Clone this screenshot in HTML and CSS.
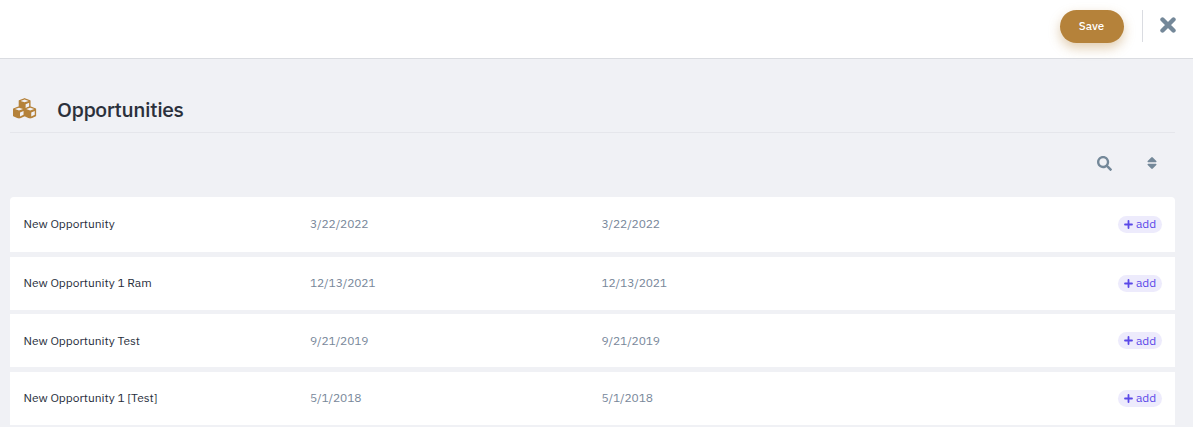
FILE: index.html
```
<!DOCTYPE html>
<html lang="en">
<head>
    <meta charset="UTF-8">
    <meta name="viewport" content="width=device-width, initial-scale=1.0">
    <title>Opportunities</title>
    <link rel="stylesheet" href="styles.css">
</head>
<body>
    <!-- Icons used more than once -->
    <svg class="icon-defs">
        <symbol id="plus" viewBox="0 0 9 9">
            <path d="M4.5 1v7M1 4.5h7" fill="none" stroke="currentColor" stroke-width="1.8" stroke-linecap="round"/>
        </symbol>
        <symbol id="cube" viewBox="0 0 12 12">
            <path d="M6 0.8L11.2 2.8V9L6 11.4L0.8 9V2.8Z" fill="currentColor" stroke="currentColor" stroke-width="1.4" stroke-linejoin="round"/>
            <path d="M6 1.4L9.9 2.8L6 4.2L2.1 2.8Z M7 6L10.4 4.7V8.3L7 9.9Z" fill="#f0f1f5"/>
        </symbol>
    </svg>

    <header class="topbar">
        <button class="save-btn">Save</button>
        <button class="close-btn" aria-label="Close">
            <svg width="16" height="16" viewBox="0 0 16 16">
                <path d="M2.5 2.5L13.5 13.5M13.5 2.5L2.5 13.5" fill="none" stroke="currentColor" stroke-width="4.4" stroke-linecap="round"/>
            </svg>
        </button>
    </header>

    <main>
        <div class="title">
            <svg class="cubes" width="24" height="21" viewBox="0 0 24 21">
                <use href="#cube" x="5.4" y="0" width="12.4" height="12.4"/>
                <use href="#cube" x="-0.2" y="8.2" width="12.4" height="12.4"/>
                <use href="#cube" x="11" y="8.2" width="12.4" height="12.4"/>
            </svg>
            <h1>Opportunities</h1>
        </div>

        <div class="tools">
            <svg width="15" height="15" viewBox="0 0 512 512">
                <path fill="currentColor" d="M505 442.7L405.3 343c-4.5-4.5-10.6-7-17-7H372c27.6-35.3 44-79.7 44-128C416 93.1 322.9 0 208 0S0 93.1 0 208s93.1 208 208 208c48.3 0 92.7-16.4 128-44v16.3c0 6.4 2.5 12.5 7 17l99.7 99.7c9.4 9.4 24.6 9.4 33.9 0l28.3-28.3c9.4-9.4 9.4-24.6.1-34zM208 336c-70.7 0-128-57.2-128-128 0-70.7 57.2-128 128-128 70.7 0 128 57.2 128 128 0 70.7-57.2 128-128 128z"/>
            </svg>
            <svg width="10" height="12" viewBox="0 0 10 12">
                <path fill="currentColor" d="M1.2 5.2Q0 5.2 0.7 4L4.2 0.4Q5 -0.2 5.8 0.4L9.3 4Q10 5.2 8.8 5.2ZM1.2 6.8H8.8Q10 6.8 9.3 8L5.8 11.6Q5 12.2 4.2 11.6L0.7 8Q0 6.8 1.2 6.8Z"/>
            </svg>
        </div>

        <!-- Opportunity rows -->
        <div class="list">
            <div class="row">
                <span class="name">New Opportunity</span>
                <span class="date">3/22/2022</span>
                <span class="date">3/22/2022</span>
                <button class="add-btn"><svg width="9" height="9"><use href="#plus"/></svg><span>add</span></button>
            </div>
            <div class="row">
                <span class="name">New Opportunity 1 Ram</span>
                <span class="date">12/13/2021</span>
                <span class="date">12/13/2021</span>
                <button class="add-btn"><svg width="9" height="9"><use href="#plus"/></svg><span>add</span></button>
            </div>
            <div class="row">
                <span class="name">New Opportunity Test</span>
                <span class="date">9/21/2019</span>
                <span class="date">9/21/2019</span>
                <button class="add-btn"><svg width="9" height="9"><use href="#plus"/></svg><span>add</span></button>
            </div>
            <div class="row">
                <span class="name">New Opportunity 1 [Test]</span>
                <span class="date">5/1/2018</span>
                <span class="date">5/1/2018</span>
                <button class="add-btn"><svg width="9" height="9"><use href="#plus"/></svg><span>add</span></button>
            </div>
        </div>
    </main>
</body>
</html>
```
FILE: styles.css
```
* {
    box-sizing: border-box;
}

body {
    margin: 0;
    height: 427px;
    overflow: hidden;
    background-color: #f0f1f5;
    font-family: "IBM Plex Sans", "Noto Sans", sans-serif;
    font-size: 12px;
    color: #272e3b;
}

button {
    border: none;
    padding: 0;
    font-family: inherit;
    cursor: pointer;
}

svg {
    display: block;
}

.icon-defs {
    display: none;
}

.topbar {
    display: flex;
    justify-content: flex-end;
    align-items: flex-start;
    height: 59px;
    padding: 10px 17px 0 0;
    background-color: #fff;
    border-bottom: 1px solid #dadce1;
}

.save-btn {
    width: 64px;
    height: 33px;
    margin-right: 18px;
    padding: 0 1px 2px 0;
    border-radius: 17px;
    background-color: #b5823a;
    color: #fff;
    font-size: 11.5px;
    font-weight: 500;
    box-shadow: 0 5px 12px rgba(181, 130, 58, 0.4);
}

.close-btn {
    height: 32px;
    padding: 0 0 2px 17px;
    border-left: 1px solid #dadce1;
    background: none;
    color: #748899;
}

main {
    padding: 0 18px 0 10px;
}

.title {
    display: flex;
    align-items: center;
    height: 74px;
    padding: 26px 0 0 3px;
    border-bottom: 1px solid #e5e6eb;
}

.cubes {
    margin-right: 20px;
    color: #b5823a;
}

h1 {
    margin: 0;
    font-size: 21px;
    font-weight: 500;
    line-height: 30px;
    letter-spacing: -0.48px;
    color: #2b303b;
}

.tools {
    display: flex;
    justify-content: flex-end;
    align-items: center;
    gap: 35px;
    height: 64px;
    padding: 0 18px 4px 0;
    color: #748899;
}

.row {
    display: grid;
    grid-template-columns: 286.5px 291.5px 1fr auto;
    align-items: center;
    height: 53px;
    margin-bottom: 5px;
    padding: 0 13px 0 13.5px;
    background-color: #fff;
}

.row:first-child {
    height: 55px;
    border-radius: 4px 4px 0 0;
}

.row:nth-child(2) {
    margin-bottom: 4px;
}

.name,
.date {
    padding-bottom: 1px;
    line-height: 16px;
}

.name {
    letter-spacing: -0.04px;
}

.date {
    color: #78879a;
    letter-spacing: -0.14px;
}

.add-btn {
    display: flex;
    align-items: center;
    justify-content: center;
    gap: 3px;
    width: 44px;
    height: 17px;
    border-radius: 9px;
    background-color: #edebfc;
    color: #5a48e8;
    font-size: 12px;
    line-height: 15px;
    letter-spacing: -0.1px;
}

.add-btn span {
    padding-bottom: 2px;
}

.row:nth-child(3) .name,
.row:nth-child(3) .date {
    padding: 1px 0 0;
}

.row:nth-child(3) .add-btn span {
    padding-bottom: 0;
}
```
